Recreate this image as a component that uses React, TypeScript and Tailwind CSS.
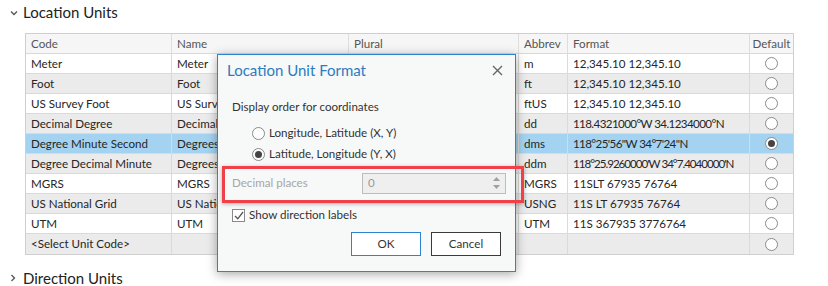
import React from "react";

const rows: { code: string; name: string; abbrev: string; format: string; bg: string; fmt?: string; sel?: boolean }[] = [
  { code: "Meter", name: "Meter", abbrev: "m", format: "12,345.10 12,345.10", bg: "bg-white" },
  { code: "Foot", name: "Foot", abbrev: "ft", format: "12,345.10 12,345.10", bg: "bg-[#ebebeb]" },
  { code: "US Survey Foot", name: "US Survey Foot", abbrev: "ftUS", format: "12,345.10 12,345.10", bg: "bg-white" },
  { code: "Decimal Degree", name: "Decimal Degree", abbrev: "dd", format: "118.4321000°W 34.1234000°N", bg: "bg-[#ebebeb]", fmt: "tracking-[-0.6px]" },
  { code: "Degree Minute Second", name: "Degrees Minutes Seconds", abbrev: "dms", format: "118°25'56\"W 34°7'24\"N", bg: "bg-[#a3d3f1]", sel: true, fmt: "tracking-[-0.6px]" },
  { code: "Degree Decimal Minute", name: "Degrees Decimal Minutes", abbrev: "ddm", format: "118°25.9260000'W 34°7.4040000'N", bg: "bg-[#ebebeb]", fmt: "tracking-[-1px]" },
  { code: "MGRS", name: "MGRS", abbrev: "MGRS", format: "11SLT 67935 76764", bg: "bg-white" },
  { code: "US National Grid", name: "US National Grid", abbrev: "USNG", format: "11S LT 67935 76764", bg: "bg-[#ebebeb]" },
  { code: "UTM", name: "UTM", abbrev: "UTM", format: "11S 367935 3776764", bg: "bg-white" },
  { code: "<Select Unit Code>", name: "", abbrev: "", format: "", bg: "bg-[#ebebeb]" },
];

const cols = "grid grid-cols-[146px_177px_170px_49px_182px_43px]";

function Radio({ checked }: { checked?: boolean }) {
  return (
    <span className="flex h-[13px] w-[13px] items-center justify-center rounded-full border border-[#8a8a8a] bg-white">
      {checked && <span className="h-[7px] w-[7px] rounded-full bg-[#444]" />}
    </span>
  );
}

export default function App() {
  return (
    <div
      className="relative h-[286px] w-[828px] overflow-hidden bg-white text-[11.6px] text-[#262626]"
      style={{ fontFamily: "Lato, 'Open Sans', sans-serif" }}
    >
      <div className="flex h-[25px] items-center pl-[10px] text-[15px] text-[#222]">
        <svg width="8" height="6" viewBox="0 0 8 6" className="mr-[5px]">
          <path d="M1 1.5 L4 4.5 L7 1.5" fill="none" stroke="#555" strokeWidth="1.3" />
        </svg>
        <span>Location Units</span>
      </div>
      <div className="ml-[25px] mt-[8px] w-[769px] border border-[#cfcfcf]">
        <div className={`${cols} h-[20px] border-b border-[#dadada] bg-[#f6f6f6] text-[#555]`}>
          <div className="flex items-center border-r border-[#dedede] pl-[5px]">Code</div>
          <div className="flex items-center border-r border-[#dedede] pl-[5px]">Name</div>
          <div className="flex items-center border-r border-[#dedede] pl-[5px]">Plural</div>
          <div className="flex items-center border-r border-[#dedede] pl-[5px]">Abbrev</div>
          <div className="flex items-center border-r border-[#dedede] pl-[5px]">Format</div>
          <div className="flex items-center justify-center">Default</div>
        </div>
        {rows.map((r, i) => (
          <div key={i} className={`${cols} h-[20px] ${i < rows.length - 1 ? "border-b border-[#dadada]" : ""} ${r.bg}`}>
            <div className="flex items-center border-r border-[#dadada] pl-[5px] whitespace-nowrap overflow-hidden">{r.code}</div>
            <div className="flex items-center border-r border-[#dadada] pl-[5px] whitespace-nowrap overflow-hidden">{r.name}</div>
            <div className="flex items-center border-r border-[#dadada] pl-[5px] whitespace-nowrap overflow-hidden">{r.name}</div>
            <div className="flex items-center border-r border-[#dadada] pl-[5px] whitespace-nowrap overflow-hidden">{r.abbrev}</div>
            <div className={`flex items-center border-r border-[#dadada] pl-[5px] whitespace-nowrap overflow-hidden ${r.fmt ?? ""}`}>{r.format}</div>
            <div className="flex items-center justify-center">
              <Radio checked={r.sel} />
            </div>
          </div>
        ))}
      </div>
      <div className="mt-[12px] flex h-[22px] items-center pl-[10px] text-[15px] text-[#222]">
        <svg width="6" height="8" viewBox="0 0 6 8" className="mr-[7px]">
          <path d="M1.5 1 L4.5 4 L1.5 7" fill="none" stroke="#555" strokeWidth="1.3" />
        </svg>
        <span>Direction Units</span>
      </div>

      {/* Dialog */}
      <div className="absolute left-[217px] top-[54px] flex h-[218px] w-[299px] flex-col border border-[#2c83d0] bg-[#f7f8f8] shadow-[0_2px_10px_rgba(0,0,0,0.35)]">
        <div className="flex h-[30px] items-center justify-between pl-[9px] pr-[12px]">
          <span className="text-[15px] text-[#2b7cc0]">Location Unit Format</span>
          <svg width="11" height="11" viewBox="0 0 11 11">
            <path d="M1 1 L10 10 M10 1 L1 10" stroke="#666" strokeWidth="1.4" />
          </svg>
        </div>
        <div className="mt-[12px] flex h-[20px] items-center pl-[14px] text-[#333]">Display order for coordinates</div>
        <div className="mt-[6px] flex h-[20px] items-center gap-[4px] pl-[34px] text-[#333]">
          <Radio />
          <span>Longitude, Latitude (X, Y)</span>
        </div>
        <div className="mt-[1px] flex h-[20px] items-center gap-[4px] pl-[34px] text-[#333]">
          <Radio checked />
          <span>Latitude, Longitude (Y, X)</span>
        </div>
        <div className="mt-[8px] flex h-[22px] items-center pl-[14px]">
          <span className="w-[130px] text-[#a6a6a6]">Decimal places</span>
          <div className="flex h-[21px] w-[144px] items-center justify-between border border-[#bdbdbd] bg-[#efefef] pl-[5px] pr-[5px] text-[#9a9a9a]">
            <span>0</span>
            <span className="flex flex-col gap-[4px]">
              <svg width="7" height="4" viewBox="0 0 7 4"><path d="M0 4 L3.5 0 L7 4 Z" fill="#a0a0a0" /></svg>
              <svg width="7" height="4" viewBox="0 0 7 4"><path d="M0 0 L3.5 4 L7 0 Z" fill="#a0a0a0" /></svg>
            </span>
          </div>
        </div>
        <div className="mt-[13px] flex h-[16px] items-center gap-[4px] pl-[14px] text-[#333]">
          <span className="flex h-[13px] w-[13px] items-center justify-center border border-[#8a8a8a] bg-white">
            <svg width="10" height="9" viewBox="0 0 10 9">
              <path d="M1 5 L3.8 7.8 L9 1" fill="none" stroke="#555" strokeWidth="1.3" />
            </svg>
          </span>
          <span>Show direction labels</span>
        </div>
        <div className="mt-[9px] flex gap-[10px] pl-[133px]">
          <div className="flex h-[24px] w-[70px] items-center justify-center border border-[#2c83d0] bg-white text-[#333]">OK</div>
          <div className="flex h-[24px] w-[70px] items-center justify-center border border-[#3a3a3a] bg-white text-[#333]">Cancel</div>
        </div>
      </div>

      {/* Red highlight */}
      <div className="absolute left-[222px] top-[166px] h-[37px] w-[302px] border-[3px] border-[#f0404a] shadow-[0_1px_4px_rgba(0,0,0,0.3)]" />
    </div>
  );
}
